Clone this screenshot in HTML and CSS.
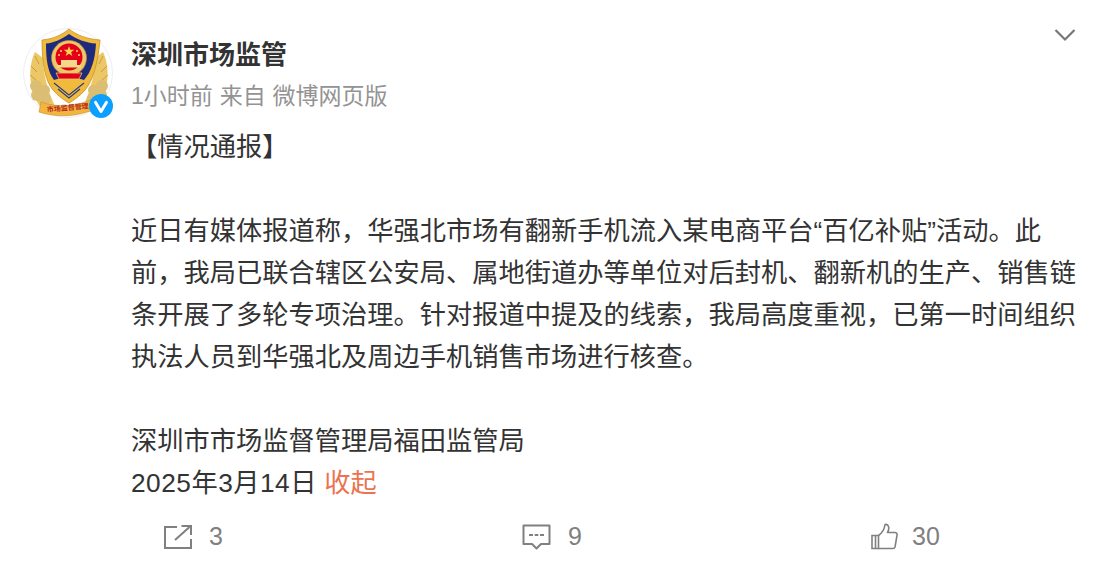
FILE: index.html
```html
<!DOCTYPE html>
<html>
<head>
    <title>深圳市场监管</title>
    <link rel="stylesheet" href="styles.css">
</head>
<body>
    <div class="post">
        <div class="post-head">
            <div class="avatar">
                <svg class="emblem" viewBox="0 0 90 90" width="90" height="90">
                    <circle cx="45" cy="45" r="44.500" fill="#fff" stroke="#eee"/>
                    <!-- wheat and flowers -->
                    <path d="M12 24 C5 38 5 62 18 80 L32 78 C24 62 20 44 20 30Z" fill="#ecc766"/>
                    <path d="M80 24 C87 38 87 62 74 80 L60 78 C68 62 72 44 72 30Z" fill="#ecc766"/>
                    <g fill="none" stroke="#b88a30" stroke-width=".7">
                        <path d="M12 28 L16 36 M8 38 L14 44 M7 47 L13 52"/>
                        <path d="M80 28 L76 36 M84 38 L78 44 M85 47 L79 52"/>
                    </g>
                    <g fill="#dcbd74">
                        <circle cx="13" cy="58" r="6"/>
                        <circle cx="14" cy="67" r="6"/>
                        <circle cx="22" cy="71" r="6"/>
                        <circle cx="22" cy="62" r="5"/>
                        <circle cx="79" cy="58" r="6"/>
                        <circle cx="78" cy="67" r="6"/>
                        <circle cx="70" cy="71" r="6"/>
                        <circle cx="70" cy="62" r="5"/>
                    </g>
                    <!-- shield -->
                    <path d="M46 1 C39 7 30 11 19 12 C19 34 22 53 30 62 C35 68 41 72 46 75 C51 72 57 68 62 62 C70 53 75 34 77 12 C64 11 53 7 46 1Z" fill="#f0bb3c" stroke="#c98f2a" stroke-width=".8"/>
                    <path d="M46 6 C39 11 31 15 23 15.500 C23 33 25 44 31 52 C35 50 57 50 61 52 C68 44 72 33 73 15.500 C63 15 53 11 46 6Z" fill="#1e2a7c"/>
                    <path d="M31 55 L46 67 L61 55 M35 61 L46 70 L57 61" fill="none" stroke="#2b3a86" stroke-width="1.200"/>
                    <!-- national emblem -->
                    <circle cx="46" cy="30" r="17.500" fill="#ecc868" stroke="#c98f2a" stroke-width=".6"/>
                    <circle cx="46" cy="29" r="13.500" fill="#e2001a"/>
                    <path d="M46 18 l1.300 3.800 h4 l-3.200 2.400 1.200 3.800 -3.300 -2.300 -3.300 2.300 1.200 -3.800 -3.200 -2.400 h4Z" fill="#f8d24a"/>
                    <g fill="#f8d24a">
                        <circle cx="38" cy="23" r="1"/>
                        <circle cx="54" cy="23" r="1"/>
                        <circle cx="36" cy="27" r="1"/>
                        <circle cx="56" cy="27" r="1"/>
                    </g>
                    <path d="M34 37 h24 v2.500 h-24Z M38 32 h16 v5 h-16Z" fill="#f4d98a"/>
                    <path d="M33 45 h26 l-3 6 h-20Z" fill="#e2001a" stroke="#ecc868" stroke-width=".8"/>
                    <!-- ribbon -->
                    <path d="M18 74 C34 80 54 79 72 70 L74 80 C56 89 34 90 16 84Z" fill="#f2b640" stroke="#c98f2a" stroke-width=".6"/>
                    <text class="ribbon-text" x="24" y="84" transform="rotate(-5 24 84)">市场监督管理</text>
                </svg>
                <svg class="verified" viewBox="0 0 24 24" width="24" height="24">
                    <circle cx="12" cy="12" r="12" fill="#0b9fff"/>
                    <path d="M6.600 8.400 L12 17.400 L17.400 8.400" fill="none" stroke="#fff" stroke-width="3" stroke-linecap="round" stroke-linejoin="round"/>
                </svg>
            </div>
            <div class="head-text">
                <div class="name">深圳市场监管</div>
                <div class="meta">1小时前 来自 微博网页版</div>
            </div>
            <svg class="chevron" viewBox="0 0 22 14" width="22" height="14">
                <path d="M1.500 2 L11 11.500 L20.500 2" fill="none" stroke="#777" stroke-width="2.200"/>
            </svg>
        </div>

        <div class="post-body">
            <p>【情况通报】</p>
            <p class="blank"></p>
            <p>近日有媒体报道称，华强北市场有翻新手机流入某电商平台“百亿补贴”活动。此前，我局已联合辖区公安局、属地街道办等单位对后封机、翻新机的生产、销售链条开展了多轮专项治理。针对报道中提及的线索，我局高度重视，已第一时间组织执法人员到华强北及周边手机销售市场进行核查。</p>
            <p class="blank"></p>
            <p>深圳市市场监督管理局福田监管局</p>
            <p><span class="date">2025年3月14日</span> <a class="collapse">收起</a></p>
        </div>

        <div class="post-foot">
            <div class="action">
                <svg viewBox="0 0 29 24" width="29" height="24">
                    <path d="M14 2 H2 V23 H28 V14" fill="none" stroke="#808080" stroke-width="2"/>
                    <path d="M12 15 L26.500 2 M18.500 1 H28 V10" fill="none" stroke="#808080" stroke-width="2"/>
                </svg>
                <span>3</span>
            </div>
            <div class="action">
                <svg viewBox="0 0 29 26" width="29" height="26">
                    <path d="M1.500 1.500 H27.500 V20 H19 L14.500 24.500 L10 20 H1.500Z" fill="none" stroke="#808080" stroke-width="2" stroke-linejoin="round"/>
                    <path d="M7 11 H11 M12.700 11 H16.300 M18 11 H22" fill="none" stroke="#808080" stroke-width="2"/>
                </svg>
                <span>9</span>
            </div>
            <div class="action action-like">
                <svg viewBox="0 0 27 27" width="27" height="27">
                    <path d="M1 12.500 H7.500 V25.500 H1Z M4.500 12.500 V25.500" fill="none" stroke="#808080" stroke-width="1.600"/>
                    <path d="M7.500 12.500 C11 10 13.500 6 14 1.500 C17.500 0.500 19 5 16.500 9.500 H24 C25.600 9.500 26.400 10.800 26 12.300 L24 24 C23.700 25 23 25.500 22 25.500 H7.500" fill="none" stroke="#808080" stroke-width="1.600" stroke-linejoin="round"/>
                </svg>
                <span>30</span>
            </div>
        </div>
    </div>
</body>
</html>
```

FILE: styles.css
```css
body {
    margin: 0;
    background: #fff;
    color: #333;
    font-family: "Liberation Sans", "Noto Sans CJK SC", sans-serif;
}
.post {
    position: relative;
    padding: 28px 0 0;
}
.post-head {
    display: flex;
    padding-left: 23px;
    height: 90px;
}
.avatar {
    position: relative;
    width: 90px;
    height: 90px;
    flex: none;
}
.emblem {
    display: block;
}
.ribbon-text {
    font-size: 7px;
    font-weight: bold;
    fill: #b5281c;
}
.verified {
    position: absolute;
    right: 0;
    bottom: 0;
}
.head-text {
    margin-left: 18px;
}
.name {
    font-size: 26px;
    font-weight: bold;
    line-height: 36px;
    margin-top: 9px;
    color: #333;
}
.meta {
    font-size: 23px;
    line-height: 32px;
    margin-top: 7px;
    word-spacing: 0.5px;
    color: #939393;
}
.chevron {
    position: absolute;
    top: 28px;
    right: 35px;
}
.post-body {
    padding: 8px 35px 0 131px;
    font-size: 26.250px;
    line-height: 42px;
}
.post-body p {
    margin: 0;
}
.post-body .blank {
    height: 42px;
}
.date {
    letter-spacing: 0.5px;
}
.collapse {
    color: #eb7350;
}
.post-foot {
    display: grid;
    grid-template-columns: 359px 349px auto;
    padding: 18px 0 0 163px;
}
.action {
    display: flex;
    align-items: center;
    gap: 17px;
    font-size: 25px;
    color: #808080;
}
.action-like {
    gap: 14px;
}
.action svg {
    display: block;
}
```
